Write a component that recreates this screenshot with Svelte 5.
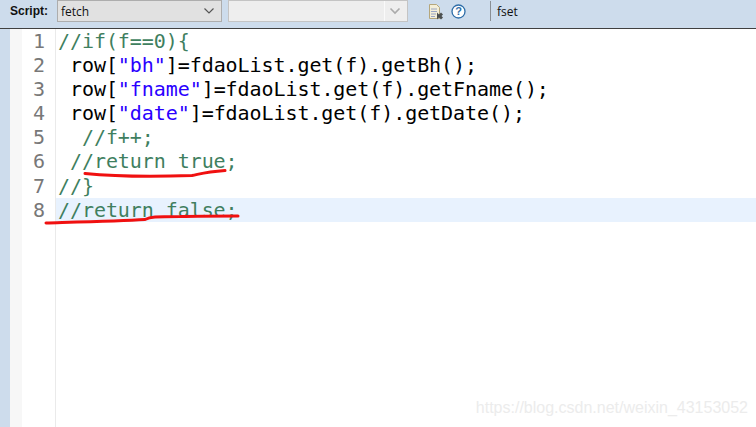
<script>
  const C = 'c', D = 'd', S = 's';
  const lines = [
    { n: 1, parts: [[C, '//if(f==0){']] },
    { n: 2, parts: [[D, ' row['], [S, '"bh"'], [D, ']=fdaoList.get(f).getBh();']] },
    { n: 3, parts: [[D, ' row['], [S, '"fname"'], [D, ']=fdaoList.get(f).getFname();']] },
    { n: 4, parts: [[D, ' row['], [S, '"date"'], [D, ']=fdaoList.get(f).getDate();']] },
    { n: 5, parts: [[C, '  //f++;']] },
    { n: 6, parts: [[C, ' //return true;']] },
    { n: 7, parts: [[C, '//}']] },
    { n: 8, parts: [[C, '//return false;']], active: true }
  ];
</script>

<div class="page">
  <div class="toolbar">
    <span class="label">Script:</span>
    <div class="select first">
      <span class="value">fetch</span>
      <svg class="chev" width="12" height="8" viewBox="0 0 12 8"><path d="M1.5 1.5 6 6l4.5-4.5" fill="none" stroke="#555" stroke-width="1.2"/></svg>
    </div>
    <div class="select second">
      <span class="value"></span>
      <span class="sep"></span>
      <svg class="chev" width="12" height="8" viewBox="0 0 12 8"><path d="M1.5 1.5 6 6l4.5-4.5" fill="none" stroke="#aaa" stroke-width="1.6"/></svg>
    </div>
    <svg class="doc" width="17" height="16" viewBox="0 0 17 16">
      <path d="M1.5.5h7l3 3v11h-10z" fill="#f4efd8" stroke="#b5a77c"/>
      <path d="M3 5h6M3 7.500h6M3 10h5M3 12.500h4" stroke="#9aa6c4"/>
      <path d="M9 9l2 2 2-2 2 2-1.500 1.500L15 14l-2 2-2-2-2 2z" fill="#4c5050" transform="translate(0 -.5)"/>
    </svg>
    <svg class="help" width="15" height="15" viewBox="0 0 15 15">
      <circle cx="7.500" cy="7.500" r="6.500" fill="#fff" stroke="#2f6ea8" stroke-width="1.300"/>
      <text x="7.500" y="11.300" text-anchor="middle" class="q">?</text>
    </svg>
    <span class="divider"></span>
    <span class="fset">fset</span>
  </div>

  <div class="body">
    <div class="rail"></div>
    <div class="margin"></div>
    <div class="editor">
      {#each lines as line}
        <div class="row" class:active={line.active}>
          <span class="num">{line.n}</span>
          <span class="code">{#each line.parts as p}<span class={p[0]}>{p[1]}</span>{/each}</span>
        </div>
      {/each}
      <div class="filler"><span class="num"></span></div>
      <svg class="ink" width="756" height="427" viewBox="0 0 756 427">
        <path d="M85 173.500C110 176 150 177 192 175.500C200 174 205 172 225 170.500" />
        <path d="M46 223C80 222 120 221 145 219.500C150 217 155 216.500 180 216.500C200 216 220 216 238 216" />
      </svg>
      <span class="mark">https://blog.csdn.net/weixin_43153052</span>
    </div>
  </div>
</div>

<style>
  :global(body) { margin: 0; background: #fff; }
  .page {
    width: 756px;
    height: 427px;
    display: flex;
    flex-direction: column;
    overflow: hidden;
    background: #cddcec;
  }
  .toolbar {
    height: 28px;
    flex: none;
    display: flex;
    align-items: center;
    box-sizing: border-box;
    padding-bottom: 6px;
    padding-left: 10px;
    background: #cddcec;
    font-family: "Liberation Sans", Arial, sans-serif;
    font-size: 12px;
    color: #111;
  }
  .label { font-weight: 700; width: 47px; }
  .select {
    height: 22px;
    box-sizing: border-box;
    display: flex;
    align-items: center;
    background: #e1e1e1;
    border: 1px solid #adadad;
  }
  .first { width: 165px; margin-right: 6px; padding-left: 3px; }
  .second { width: 180px; background: #eeeeee; border-color: #c4c4c4; margin-right: 20px; }
  .value { flex: 1; font-family: "Open Sans", "Liberation Sans", sans-serif; font-size: 12px; }
  .chev { margin-right: 6px; }
  .sep { width: 1px; height: 20px; background: #fafafa; margin-right: 4px; }
  .doc { margin-right: 6px; margin-top: 2px; }
  .help { margin-right: 24px; }
  .q { font: 700 11px "Liberation Sans", sans-serif; fill: #2f6ea8; }
  .divider { width: 1px; height: 20px; background: #8a8f94; margin-right: 6px; }
  .fset { font-family: "Open Sans", "Liberation Sans", sans-serif; font-size: 12px; }
  .body { flex: 1; display: flex; border-top: 1px solid #404040; min-height: 0; }
  .rail { width: 10px; background: #cddcec; flex: none; }
  .margin { width: 12px; background: #f7f7f7; flex: none; }
  .editor {
    flex: 1;
    position: relative;
    background: #fff;
    display: flex;
    flex-direction: column;
    font-family: "DejaVu Sans Mono", monospace;
    font-size: 20px;
    letter-spacing: -0.07px;
  }
  .row { height: 24.1px; line-height: 24.1px; display: flex; white-space: pre; }
  .active { background: #e8f2fe; }
  .num {
    width: 34px;
    box-sizing: border-box;
    flex: none;
    padding-right: 10px;
    text-align: right;
    color: #787878;
    background: #fff;
    border-right: 1px solid #eaeaea;
  }
  .code { padding-left: 2px; }
  .filler { flex: 1; display: flex; }
  .c { color: #3f7f5f; }
  .d { color: #000; }
  .s { color: #2a00ff; }
  .ink { position: absolute; left: -22px; top: -29px; pointer-events: none; }
  .ink path { fill: none; stroke: #f01010; stroke-width: 3; stroke-linecap: round; }
  .mark {
    position: absolute;
    right: 8px;
    bottom: 10px;
    font-family: "Liberation Sans", Arial, sans-serif;
    font-size: 16px;
    letter-spacing: 0;
    color: #ececec;
  }
</style>
